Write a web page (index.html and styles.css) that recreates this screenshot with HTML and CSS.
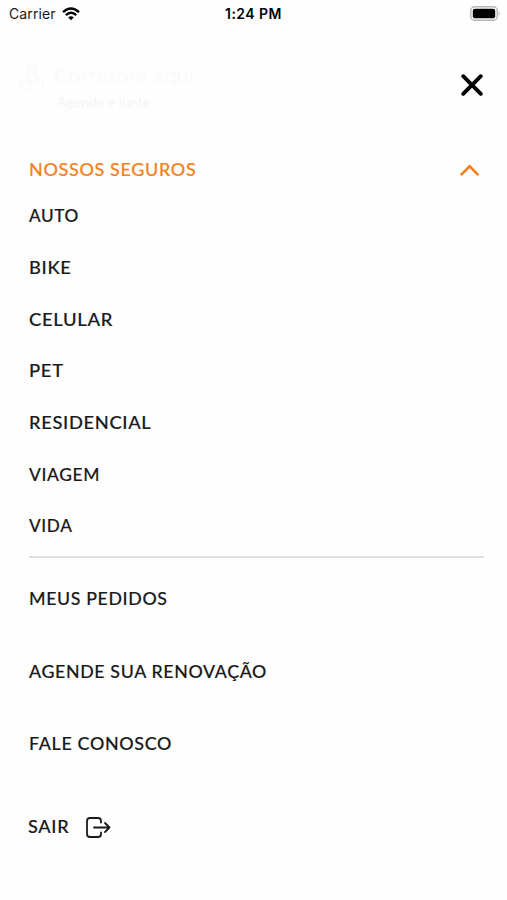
FILE: index.html
```html
<!DOCTYPE html>
<html lang="pt-BR">
<head>
<meta charset="utf-8">
<title>Menu</title>
<link rel="stylesheet" href="styles.css">
</head>
<body>
<div class="status">
  <div class="carrier"><span>Carrier</span>
    <svg width="18" height="14" viewBox="0 0 18 14" fill="none" stroke="#000" stroke-width="2.4"><path d="M1 5.2Q9-2 17 5.2M3.8 8.2Q9 3.4 14.2 8.2"/><path d="M6.2 10.3Q9 8 11.8 10.3L9 13.3Z" fill="#000" stroke="none"/></svg>
  </div>
  <span class="time">1:24 PM</span>
  <svg class="battery" width="31" height="15" viewBox="0 0 31 15"><rect x=".8" y=".8" width="26.4" height="13.4" rx="4" fill="#fff" stroke="#b5b5b5" stroke-width="1.4"/><rect x="2.8" y="2.8" width="22.4" height="9.4" rx="2" fill="#000"/><path d="M28.6 5.2Q31 7.5 28.6 9.8Z" fill="#b5b5b5"/></svg>
</div>
<header class="head">
  <div class="logo">
    <svg width="28" height="32" viewBox="0 0 28 32" fill="none" stroke="#fafafa" stroke-width="2"><path d="M11 2h6v7h-6zM10 13h8v7h-8zM3 21h9v8H3zM17 16l8 3v7"/></svg>
    <div class="brand"><span class="brand-name">Corretora aqui</span><span class="brand-sub">Agende e junte</span></div>
  </div>
  <svg class="close" width="24" height="24" viewBox="0 0 24 24" stroke="#000" stroke-width="3.9" stroke-linecap="round"><path d="M3.2 3.2L20.8 20.8M20.8 3.2L3.2 20.8"/></svg>
</header>
<nav>
  <div class="row title"><span class="w-nossos">NOSSOS SEGUROS</span>
    <svg width="20" height="12" viewBox="0 0 20 12" fill="none" stroke="#f58220" stroke-width="2.7" stroke-linecap="round" stroke-linejoin="round"><path d="M1.6 10.4L9.6 2.2L17.6 10.4"/></svg>
  </div>
  <ul class="list">
    <li><span class="w-auto">AUTO</span></li>
    <li><span class="w-bike">BIKE</span></li>
    <li><span class="w-celular">CELULAR</span></li>
    <li><span class="w-pet">PET</span></li>
    <li><span class="w-resid">RESIDENCIAL</span></li>
    <li><span class="w-viagem">VIAGEM</span></li>
    <li><span class="w-vida">VIDA</span></li>
  </ul>
  <ul class="links">
    <li><span class="w-meus">MEUS PEDIDOS</span></li>
    <li><span class="w-agende">AGENDE SUA RENOVAÇÃO</span></li>
    <li><span class="w-fale">FALE CONOSCO</span></li>
  </ul>
  <div class="exit"><span class="w-sair">SAIR</span>
    <svg width="25" height="21" viewBox="0 0 25 21" fill="none" stroke="#1a1a1a" stroke-width="1.8" stroke-linecap="round" stroke-linejoin="round"><path d="M15 5.5V4Q15 1 12 1H4Q1 1 1 4V17Q1 20 4 20H12Q15 20 15 17V15.5M8 10.5H23.5M19 6L23.5 10.5L19 15"/></svg>
  </div>
</nav>
</body>
</html>
```

FILE: styles.css
```css
* { box-sizing: border-box; }
body {
  margin: 0;
  height: 900px;
  overflow: hidden;
  background: #fefefe;
  color: #1a1a1a;
  font: 500 16.5px/24px Lato, "Open Sans", sans-serif;
}
svg { display: block; flex: none; }
ul { margin: 0; padding: 0; list-style: none; }
.status {
  display: grid;
  grid-template-columns: 1fr auto 1fr;
  align-items: center;
  height: 28px;
  padding: 0 6px 1px 9px;
  font: 400 14px/20px Inter, sans-serif;
}
.carrier { display: flex; align-items: center; gap: 6px; }
.carrier span { letter-spacing: .1px; }
.time { margin-left: -3px; font-weight: 600; color: #000; letter-spacing: .45px; }
.battery { justify-self: end; }
.head {
  display: flex;
  justify-content: space-between;
  height: 122px;
  padding: 33px 23px 0 18px;
}
.logo { display: flex; gap: 8px; color: #fafafa; }
.brand { display: flex; flex-direction: column; }
.brand-name { font-size: 22px; line-height: 28px; }
.brand-sub { font-size: 14px; line-height: 26px; padding-left: 3px; color: #f5f5f5; }
.close { margin-top: 12px; }
nav { padding: 0 23px 0 29px; white-space: nowrap; }
.row { display: flex; justify-content: space-between; align-items: center; height: 40px; }
.title { color: #f58220; padding-right: 4px; }
.list { height: 368px; padding-top: .4px; border-bottom: 2px solid #e0e0e0; }
.list li { display: flex; align-items: center; height: 51.7px; }
.links { padding-top: 5px; }
.links li { display: flex; align-items: center; height: 72.5px; }
.exit { display: flex; align-items: center; gap: 20px; height: 93px; margin-left: -1px; }
nav span {
  letter-spacing: .6px;
  transform: scaleX(var(--stretch));
  transform-origin: left;
  -webkit-text-stroke: .15px currentColor;
}
.w-nossos { --stretch: 1.09; }
.w-auto { --stretch: 1.04; }
.w-bike { --stretch: 1.11; }
.w-celular { --stretch: 1.12; }
.w-pet { --stretch: 1.12; }
.w-resid { --stretch: 1.11; }
.w-viagem { --stretch: 1.055; }
.w-vida { --stretch: 1.04; }
.w-meus { --stretch: 1.075; }
.w-agende { --stretch: 1.077; }
.w-fale { --stretch: 1.085; }
.w-sair { --stretch: 1.1; }
```
